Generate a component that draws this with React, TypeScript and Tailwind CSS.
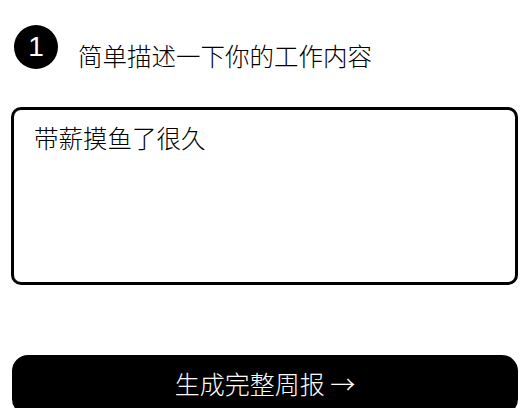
import React from 'react';

const font = { fontFamily: '"Noto Sans CJK SC", "Noto Sans", sans-serif' };

export default function App() {
  return (
    <div className="w-[524px] h-[408px] overflow-hidden bg-white text-black" style={font}>
      <div className="pl-3 pr-[6px] pt-[25px]">
        <div className="flex items-start gap-5 pl-[2px]">
          <div className="w-[44px] h-[44px] rounded-full bg-black text-white flex items-center justify-center text-[28px] leading-none shrink-0 font-['Liberation_Sans',sans-serif]">
            1
          </div>
          <div className="pt-[16px] text-[24.5px] leading-[30px] font-light">简单描述一下你的工作内容</div>
        </div>
        <div className="mt-[36px] h-[178px] rounded-[10px] border-[3px] border-black px-5 pt-[12px] text-[24.5px] leading-[32px] font-light ml-[-1px]">
          带薪摸鱼了很久
        </div>
        <button className="mt-[70px] w-full h-[60px] rounded-[16px] bg-black text-white text-[25px] leading-none font-light flex items-start justify-center pt-[16px]">
          生成完整周报 →
        </button>
      </div>
    </div>
  );
}
